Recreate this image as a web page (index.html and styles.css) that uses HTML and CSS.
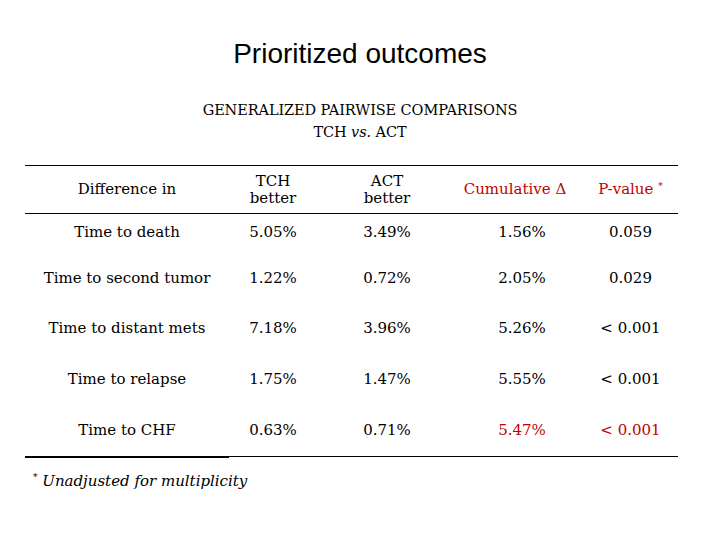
FILE: index.html
```html
<!DOCTYPE html>
<html>
<head>
<meta charset="utf-8">
<link rel="stylesheet" href="styles.css">
</head>
<body>
<div class="slide">
  <h1 class="title">Prioritized outcomes</h1>
  <div class="subtitle">
    <div>GENERALIZED PAIRWISE COMPARISONS</div>
    <div>TCH <i class="vs">vs.</i> ACT</div>
  </div>
  <table class="results">
    <thead>
      <tr>
        <th class="c1">Difference in</th>
        <th class="c2">TCH<br>better</th>
        <th class="c3">ACT<br>better</th>
        <th class="c4 red">Cumulative Δ</th>
        <th class="c5 red">P-value <sup>*</sup></th>
      </tr>
    </thead>
    <tbody>
      <tr class="r1"><td class="c1">Time to death</td><td class="c2">5.05%</td><td class="c3">3.49%</td><td class="c4">1.56%</td><td class="c5">0.059</td></tr>
      <tr class="r2"><td class="c1">Time to second tumor</td><td class="c2">1.22%</td><td class="c3">0.72%</td><td class="c4">2.05%</td><td class="c5">0.029</td></tr>
      <tr class="r3"><td class="c1">Time to distant mets</td><td class="c2">7.18%</td><td class="c3">3.96%</td><td class="c4">5.26%</td><td class="c5">&lt; 0.001</td></tr>
      <tr class="r4"><td class="c1">Time to relapse</td><td class="c2">1.75%</td><td class="c3">1.47%</td><td class="c4">5.55%</td><td class="c5">&lt; 0.001</td></tr>
      <tr class="r5 last"><td class="c1">Time to CHF</td><td class="c2">0.63%</td><td class="c3">0.71%</td><td class="c4 red">5.47%</td><td class="c5 red">&lt; 0.001</td></tr>
    </tbody>
  </table>
  <div class="footnote"><sup>*</sup> Unadjusted for multiplicity</div>
</div>
</body>
</html>
```
FILE: styles.css
```css
html, body {
  margin: 0;
  padding: 0;
  background: #ffffff;
}
.slide {
  width: 720px;
  height: 540px;
  box-sizing: border-box;
  padding-top: 38px;
  color: #000;
  font-family: "DejaVu Serif", serif;
}
.title {
  margin: 0;
  text-align: center;
  font-family: "Liberation Sans", Arial, sans-serif;
  font-weight: normal;
  font-size: 28px;
  line-height: 32px;
}
.subtitle {
  margin-top: 29px;
  text-align: center;
  font-size: 14.5px;
  line-height: 22px;
  letter-spacing: -0.1px;
}
.vs {
  font-style: italic;
}
.results {
  margin: 22px 0 0 25px;
  width: 653px;
  border-collapse: collapse;
  table-layout: fixed;
  font-family: "DejaVu Serif", serif;
  font-size: 15px;
}
.results th, .results td {
  box-sizing: border-box;
}
.results thead th {
  font-weight: normal;
  border-top: 1px solid #000;
  border-bottom: 1px solid #000;
  height: 48px;
  padding: 0;
  line-height: 17px;
  vertical-align: middle;
}
.results td {
  padding: 9px 0 0 0;
  text-align: center;
  line-height: 18px;
  vertical-align: top;
  white-space: nowrap;
}
.results tr.r1 { height: 46px; }
.results tr.r2 { height: 50px; }
.results tr.r3 { height: 51px; }
.results tr.r4 { height: 51px; }
.results tr.r5 { height: 45px; }
.results tr.last td {
  border-bottom: 1px solid #000;
}
.results tr.last td.c1 {
  border-bottom: 2px solid #000;
}
.c1 { width: 204px; }
.c2 { width: 88px; }
.c3 { width: 146px; }
.c4 { width: 122px; }
.c5 { width: 93px; }
.results .c3 { padding-right: 6px; }
.results td.c4 { padding-right: 4px; }
.results th.c4 { padding-right: 18px; }
.results .c5 { padding-right: 2px; }
.red {
  color: #c00000;
}
sup {
  font-size: 9px;
  vertical-align: top;
  line-height: 10px;
}
.footnote {
  margin: 14px 0 0 33px;
  font-style: italic;
  font-size: 15px;
}
```
